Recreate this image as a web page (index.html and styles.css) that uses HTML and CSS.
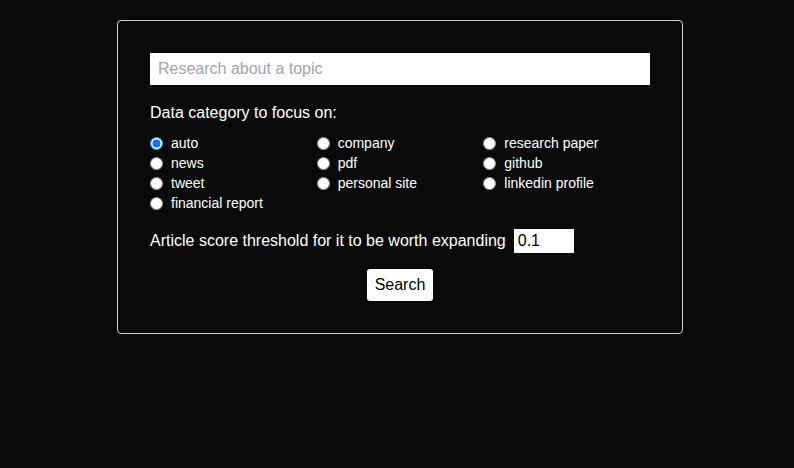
FILE: index.html
```html
<!DOCTYPE html>
<html>
<head>
<meta charset="utf-8">
<link rel="stylesheet" href="styles.css">
</head>
<body>
<div class="page">
  <form class="panel">
    <input class="topic" type="text" placeholder="Research about a topic">
    <div class="label">Data category to focus on:</div>
    <div class="cats">
      <label class="cat"><input type="radio" name="c" checked><span>auto</span></label>
      <label class="cat"><input type="radio" name="c"><span>company</span></label>
      <label class="cat"><input type="radio" name="c"><span>research paper</span></label>
      <label class="cat"><input type="radio" name="c"><span>news</span></label>
      <label class="cat"><input type="radio" name="c"><span>pdf</span></label>
      <label class="cat"><input type="radio" name="c"><span>github</span></label>
      <label class="cat"><input type="radio" name="c"><span>tweet</span></label>
      <label class="cat"><input type="radio" name="c"><span>personal site</span></label>
      <label class="cat"><input type="radio" name="c"><span>linkedin profile</span></label>
      <label class="cat"><input type="radio" name="c"><span>financial report</span></label>
    </div>
    <div class="threshold">
      <span>Article score threshold for it to be worth expanding</span>
      <input class="score" type="text" value="0.1">
    </div>
    <div class="actions">
      <button type="button" class="search">Search</button>
    </div>
  </form>
</div>
</body>
</html>
```

FILE: styles.css
```css
html, body {
  margin: 0;
  padding: 0;
  background: #0a0a0a;
  font-family: "Liberation Sans", Arial, sans-serif;
  color: #ffffff;
}
.page {
  display: flex;
  justify-content: center;
  padding: 20px 0 0 6px;
}
.panel {
  width: 500px;
  padding: 32px;
  border: 1px solid #cfcfcf;
  border-radius: 4px;
  background: #0a0a0a;
  display: flex;
  flex-direction: column;
}
.topic {
  box-sizing: border-box;
  height: 32px;
  width: 500px;
  border: none;
  outline: none;
  padding: 0 8px;
  font-family: "Liberation Sans", Arial, sans-serif;
  font-size: 16px;
  color: #000;
  background: #fff;
}
.topic::placeholder {
  color: #a4a4ad;
}
.label {
  margin-top: 19px;
  font-size: 16px;
  line-height: 18px;
}
.cats {
  margin-top: 11px;
  display: grid;
  grid-template-columns: repeat(3, 1fr);
  grid-auto-rows: 20px;
}
.cat {
  display: flex;
  align-items: center;
  font-size: 14px;
}
.cat input {
  margin: 0 8px 0 0;
  width: 13px;
  height: 13px;
}
.threshold {
  margin-top: 16px;
  display: flex;
  align-items: center;
  height: 24px;
  font-size: 16px;
}
.score {
  box-sizing: border-box;
  margin-left: 8px;
  width: 60px;
  height: 24px;
  border: none;
  outline: none;
  padding: 0 4px;
  font-family: "Liberation Sans", Arial, sans-serif;
  font-size: 16px;
  color: #000;
  background: #fff;
}
.actions {
  margin-top: 16px;
  display: flex;
  justify-content: center;
}
.search {
  height: 32px;
  width: 66px;
  padding: 0;
  border: none;
  border-radius: 3px;
  background: #fff;
  color: #000;
  font-family: "Liberation Sans", Arial, sans-serif;
  font-size: 16px;
}
```
